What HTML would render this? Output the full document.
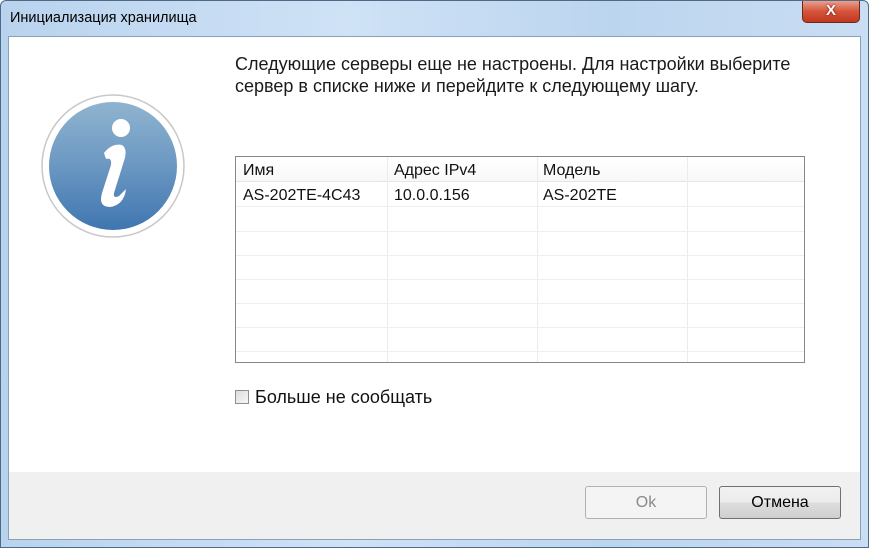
<!DOCTYPE html>
<html><head><meta charset="utf-8"><style>
*{margin:0;padding:0;box-sizing:border-box}
body{width:869px;height:548px;overflow:hidden;font-family:"Liberation Sans","DejaVu Sans",sans-serif;background:#fff;position:relative}
.frame{position:absolute;left:0;top:0;width:869px;height:548px;background:linear-gradient(90deg,#b9d3ee 0%,#cfe2f6 40%,#bcd5ef 70%,#c9ddf3 100%);border:1px solid #4f6a88;border-radius:6px 6px 0 0}
.title{position:absolute;left:9px;top:9px;font-size:14.5px;color:#000}
.close{position:absolute;left:801px;top:0;width:58px;height:22px;border:1px solid #6b2a1e;border-top:none;border-radius:0 0 5px 5px;background:linear-gradient(#e9a08c,#d4543a 50%,#c1371e);color:#fff;font:bold 15px "Liberation Sans",sans-serif;text-align:center;line-height:20px;text-shadow:0 0 2px #600}
.client{position:absolute;left:7px;top:35px;width:853px;height:504px;background:#fff;border:1px solid #8aa0b8}
.footer{position:absolute;left:0;top:435px;width:851px;height:67px;background:#f0f0f0}
.msg{position:absolute;left:226px;top:16px;font-size:18px;line-height:22px;color:#1a1a1a}
.tbl{position:absolute;left:226px;top:119px;width:570px;height:207px;border:1px solid #828790;overflow:hidden}
.hd{position:absolute;left:0;top:0;width:568px;height:25px;background:linear-gradient(#fff,#f7f8fa);border-bottom:1px solid #e3e5e8}
.c{position:absolute;font-size:16px;color:#111}
.vl{position:absolute;top:0;width:1px;height:207px;background:#ececec}
.hl{position:absolute;left:0;width:568px;height:1px;background:#efefef}
.cb{position:absolute;left:226px;top:353px;width:14px;height:14px;border:1px solid #8e8f8f;background:linear-gradient(135deg,#ddd,#f6f6f6)}
.cbl{position:absolute;left:246px;top:350px;font-size:18px;color:#111}
.btn{position:absolute;top:14px;width:122px;height:33px;border:1px solid #707070;border-radius:3px;background:linear-gradient(#f2f2f2 0%,#ebebeb 50%,#dddddd 51%,#cfcfcf 100%);font-size:16px;text-align:center;line-height:31px;color:#000}
.dis{border-color:#adb2b5;background:#f4f4f4;color:#8a8a8a}
</style></head><body>
<div class="frame">
<div class="title">Инициализация хранилища</div>
<div class="close">X</div>
<div class="client">
<svg style="position:absolute;left:31px;top:56px" width="146" height="146" viewBox="0 0 146 146">
<defs><linearGradient id="g" x1="0" y1="0" x2="0" y2="1"><stop offset="0" stop-color="#8fb4cf"/><stop offset="0.5" stop-color="#6b97c2"/><stop offset="1" stop-color="#3f76b0"/></linearGradient></defs>
<circle cx="73" cy="73" r="71" fill="#fff" stroke="#c8c8c8" stroke-width="1.5"/>
<circle cx="73" cy="73" r="64" fill="url(#g)"/>
<circle cx="81" cy="35" r="9" fill="#fff"/>
<path d="M64 60 Q72 50 82 52 Q88 56 84 68 L74 100 Q73 106 79 103 L86 96 Q84 112 70 114 Q58 114 62 100 L71 72 Q72 64 66 66 Z" fill="#fff"/>
</svg>
<div class="msg">Следующие серверы еще не настроены. Для настройки выберите<br>сервер в списке ниже и перейдите к следующему шагу.</div>
<div class="tbl">
<div class="hd"></div>
<div class="vl" style="left:151px"></div><div class="vl" style="left:301px"></div><div class="vl" style="left:451px"></div>
<div class="hl" style="top:49px"></div><div class="hl" style="top:74px"></div><div class="hl" style="top:98px"></div><div class="hl" style="top:122px"></div><div class="hl" style="top:146px"></div><div class="hl" style="top:170px"></div><div class="hl" style="top:194px"></div>
<div class="c" style="left:7px;top:5px">Имя</div>
<div class="c" style="left:158px;top:5px">Адрес IPv4</div>
<div class="c" style="left:307px;top:5px">Модель</div>
<div class="c" style="left:7px;top:30px">AS-202TE-4C43</div>
<div class="c" style="left:158px;top:30px">10.0.0.156</div>
<div class="c" style="left:307px;top:30px">AS-202TE</div>
</div>
<div class="cb"></div>
<div class="cbl">Больше не сообщать</div>
<div class="footer">
<div class="btn dis" style="left:576px">Ok</div>
<div class="btn" style="left:710px">Отмена</div>
</div>
</div>
</div>
</body></html>
